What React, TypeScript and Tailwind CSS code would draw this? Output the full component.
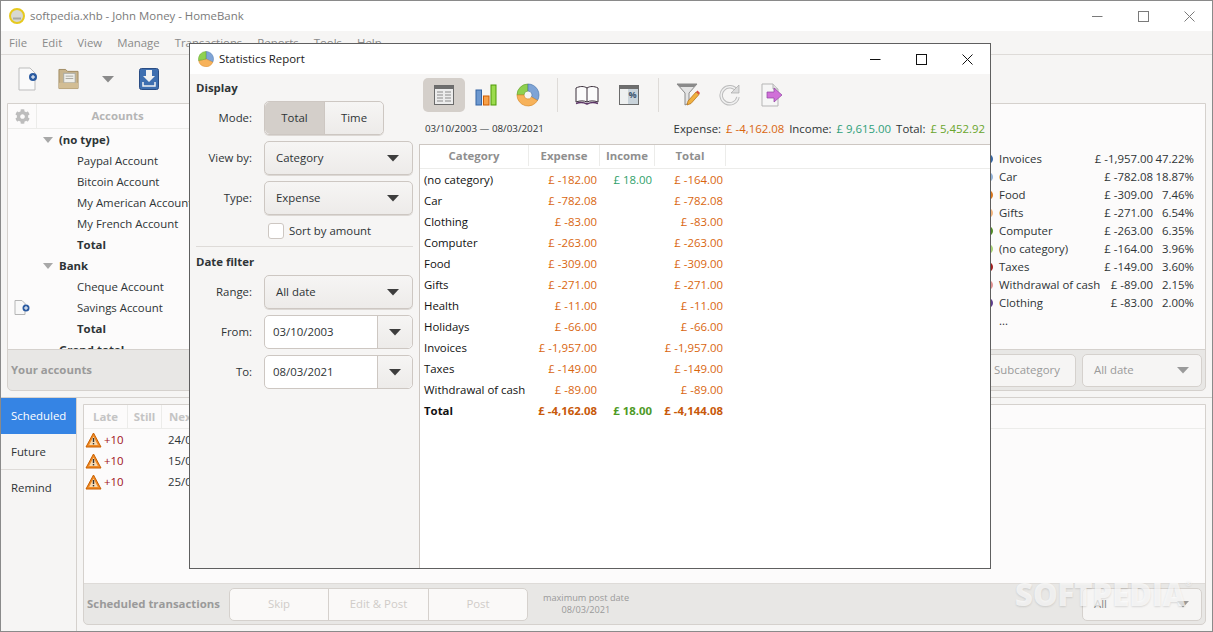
import { FaCog } from "react-icons/fa";

const accounts = [
  { name: "(no type)", kind: "group" },
  { name: "Paypal Account", kind: "item" },
  { name: "Bitcoin Account", kind: "item" },
  { name: "My American Account", kind: "item" },
  { name: "My French Account", kind: "item" },
  { name: "Total", kind: "total" },
  { name: "Bank", kind: "group" },
  { name: "Cheque Account", kind: "item" },
  { name: "Savings Account", kind: "item", icon: true },
  { name: "Total", kind: "total" },
  { name: "Grand total", kind: "grand" },
];

const legend = [
  ["Invoices", "£ -1,957.00", "47.22%", "#3465a4"],
  ["Car", "£ -782.08", "18.87%", "#8fb0d8"],
  ["Food", "£ -309.00", "7.46%", "#d9761e"],
  ["Gifts", "£ -271.00", "6.54%", "#f2b37a"],
  ["Computer", "£ -263.00", "6.35%", "#4e8a24"],
  ["(no category)", "£ -164.00", "3.96%", "#a4d070"],
  ["Taxes", "£ -149.00", "3.60%", "#a01c1c"],
  ["Withdrawal of cash", "£ -89.00", "2.15%", "#e09090"],
  ["Clothing", "£ -83.00", "2.00%", "#5c3c8c"],
];

const rows = [
  ["(no category)", "£ -182.00", "£ 18.00", "£ -164.00"],
  ["Car", "£ -782.08", "", "£ -782.08"],
  ["Clothing", "£ -83.00", "", "£ -83.00"],
  ["Computer", "£ -263.00", "", "£ -263.00"],
  ["Food", "£ -309.00", "", "£ -309.00"],
  ["Gifts", "£ -271.00", "", "£ -271.00"],
  ["Health", "£ -11.00", "", "£ -11.00"],
  ["Holidays", "£ -66.00", "", "£ -66.00"],
  ["Invoices", "£ -1,957.00", "", "£ -1,957.00"],
  ["Taxes", "£ -149.00", "", "£ -149.00"],
  ["Withdrawal of cash", "£ -89.00", "", "£ -89.00"],
];

const Caret = ({ color = "#3d3d3d" }: { color?: string }) => (
  <svg width="12" height="7" viewBox="0 0 12 7">
    <path d="M0 0h12L6 6.5z" fill={color} />
  </svg>
);

const WinButtons = ({ color }: { color: string }) => (
  <div className="flex h-full">
    <div className="flex w-[46px] items-center justify-center">
      <svg width="11" height="11" viewBox="0 0 11 11"><path d="M0 5.5h10.5" stroke={color} /></svg>
    </div>
    <div className="flex w-[46px] items-center justify-center">
      <svg width="11" height="11" viewBox="0 0 11 11"><rect x="0.5" y="0.5" width="10" height="10" fill="none" stroke={color} /></svg>
    </div>
    <div className="flex w-[46px] items-center justify-center">
      <svg width="11" height="11" viewBox="0 0 11 11"><path d="M.5.5l10 10M10.5.5l-10 10" stroke={color} /></svg>
    </div>
  </div>
);

const PieIcon = ({ size = 16 }: { size?: number }) => (
  <svg width={size} height={size} viewBox="0 0 16 16">
    <path d="M8 8V.5a7.5 7.5 0 0 1 6.8 10.7z" fill="#7fa4d6" stroke="#4f78ad" strokeWidth="0.5" />
    <path d="M8 8l6.8 3.2A7.5 7.5 0 0 1 .6 9.5z" fill="#f7b25a" stroke="#d98b2b" strokeWidth="0.5" />
    <path d="M8 8L.6 9.5A7.5 7.5 0 0 1 8 .5z" fill="#8fd14f" stroke="#67a32e" strokeWidth="0.5" />
  </svg>
);

const DonutIcon = () => (
  <svg width="24" height="24" viewBox="0 0 24 24">
    <path d="M1 12A11 11 0 0 1 12 1V8A4 4 0 0 0 8 12z" fill="#8fd14f" stroke="#67a32e" strokeWidth="0.7" />
    <path d="M12 1A11 11 0 0 1 21.5 17.5L15.500 14A4 4 0 0 0 12 8z" fill="#7fa4d6" stroke="#4f78ad" strokeWidth="0.7" />
    <path d="M21.500 17.500A11 11 0 0 1 1 12L8 12A4 4 0 0 0 15.500 14z" fill="#f7b25a" stroke="#d98b2b" strokeWidth="0.7" />
  </svg>
);

const TableIcon = () => (
  <svg width="20" height="20" viewBox="0 0 20 20">
    <rect x="0.5" y="0.5" width="19" height="19" fill="#ececec" stroke="#6b6b6b" />
    <rect x="1" y="1" width="18" height="3" fill="#6e6e6e" />
    <path d="M3 7h6M11 7h6M3 10h6M11 10h6M3 13h6M11 13h6M3 16h6M11 16h6" stroke="#8a8a8a" />
  </svg>
);

const BarsIcon = () => (
  <svg width="22" height="22" viewBox="0 0 22 22">
    <rect x="1" y="6" width="5.5" height="15" fill="#6d98cf" stroke="#3465a4" />
    <rect x="8.5" y="12" width="5.5" height="9" fill="#f7a14a" stroke="#ce5c00" />
    <rect x="16" y="1" width="5" height="20" fill="#9bdb4d" stroke="#4e9a06" />
  </svg>
);

const BookIcon = () => (
  <svg width="24" height="20" viewBox="0 0 24 20">
    <path d="M1 17V3c4-2 8-2 11 0 3-2 7-2 11 0v14c-4-1.500-8-1.500-11 0-3-1.500-7-1.500-11 0z" fill="#fbfbfb" stroke="#3b2f3b" />
    <path d="M12 3v14" stroke="#3b2f3b" />
    <path d="M1 18.500c4-1.500 8-1 11 .5 3-1.500 7-2 11-.5" fill="none" stroke="#5c3566" strokeWidth="1.500" />
  </svg>
);

const PercentIcon = () => (
  <svg width="20" height="20" viewBox="0 0 20 20">
    <rect x="0.5" y="0.5" width="19" height="19" fill="#eef0f0" stroke="#6b6b6b" />
    <rect x="1" y="1" width="18" height="3" fill="#6e6e6e" />
    <rect x="9" y="4" width="10" height="15" fill="#c9d3da" />
    <text x="13.500" y="12.500" fontSize="9" fontWeight="700" textAnchor="middle" fill="#3d5670">%</text>
  </svg>
);

const FilterIcon = () => (
  <svg width="24" height="24" viewBox="0 0 24 24">
    <path d="M1 1h20l-8 9v10l-4 2V10z" fill="#e4e4e4" stroke="#8a8a8a" />
    <path d="M1 1h20l-3 3H4z" fill="#8a8a8a" />
    <path d="M11 22l1-4 8-9 3 2.500-8 9z" fill="#f0b040" stroke="#b06a10" strokeWidth="0.7" />
    <path d="M20 9l1.500-1.500 2.500 2.500-1 1.500z" fill="#d9503f" />
  </svg>
);

const RefreshIcon = () => (
  <svg width="22" height="22" viewBox="0 0 22 22">
    <path d="M18 7a8.500 8.500 0 1 0 1 6" fill="none" stroke="#bdbdbd" strokeWidth="3.500" />
    <path d="M18 7a8.500 8.500 0 1 0 1 6" fill="none" stroke="#f0f0f0" strokeWidth="1.500" />
    <path d="M20 1v8h-8z" fill="#dcdcdc" stroke="#a0a0a0" strokeWidth="0.6" />
  </svg>
);

const ExportIcon = () => (
  <svg width="22" height="24" viewBox="0 0 22 24">
    <path d="M1 1h11l5 5v17H1z" fill="#f6f6f6" stroke="#b5b5b5" />
    <path d="M12 1v5h5" fill="#e0e0e0" stroke="#b5b5b5" />
    <path d="M6 9h7V5l8 7-8 7v-4H6z" fill="#d070d8" stroke="#8e44a0" strokeWidth="0.7" />
  </svg>
);

const Warning = () => (
  <svg width="17" height="16" viewBox="0 0 17 16">
    <path d="M8.500 1L16 15H1z" fill="#f08a24" stroke="#c75f00" strokeLinejoin="round" />
    <path d="M8.500 4.500L12.800 13H4.200z" fill="#f6d9b0" />
    <rect x="7.800" y="6" width="1.400" height="4" fill="#333" />
    <rect x="7.800" y="11" width="1.400" height="1.400" fill="#333" />
  </svg>
);

const Select = ({ label }: { label: string }) => (
  <div className="flex h-[34px] w-[149px] items-center justify-between rounded-[5px] border border-[#cdc7c2] bg-linear-to-b from-[#f6f5f4] to-[#edebe9] pl-[11px] pr-[13px] shadow-[0_1px_0_#dcd8d4]">
    <span>{label}</span>
    <Caret />
  </div>
);

const DateField = ({ value }: { value: string }) => (
  <div className="flex h-[34px] w-[149px] rounded-[5px] border border-[#cdc7c2] bg-white">
    <span className="flex flex-1 items-center pl-[8px]">{value}</span>
    <span className="flex w-[35px] items-center justify-center rounded-r-[5px] border-l border-[#cdc7c2] bg-linear-to-b from-[#f6f5f4] to-[#edebe9]">
      <Caret />
    </span>
  </div>
);

const Field = ({ label, children }: { label: string; children: React.ReactNode }) => (
  <div className="flex items-center">
    <span className="w-[56px] shrink-0 text-right">{label}</span>
    <div className="ml-[12px]">{children}</div>
  </div>
);

const StatsDialog = () => (
  <div className="absolute left-[188px] top-[42px] z-10 flex h-[526px] w-[802px] flex-col border border-[#5f5f5f] bg-[#f6f5f4] text-[#2e3436]">
    <div className="flex h-[30px] shrink-0 items-center justify-between bg-white pl-[8px] text-[#1a1a1a]">
      <div className="flex items-center gap-[5px]">
        <PieIcon />
        <span>Statistics Report</span>
      </div>
      <WinButtons color="#111111" />
    </div>
    <div className="flex min-h-0 flex-1">
      <div className="w-[229px] shrink-0 pl-[6px] pr-[6px] pt-[5px]">
        <div className="mb-[5px] h-[17px] font-bold leading-[17px]">Display</div>
        <div className="flex flex-col gap-[6px]">
          <Field label="Mode:">
            <div className="flex h-[34px] w-[120px] rounded-[5px] border border-[#cdc7c2] shadow-[0_1px_0_#dcd8d4]">
              <span className="flex w-[60px] items-center justify-center rounded-l-[5px] border-r border-[#cdc7c2] bg-[#d4cfca]">Total</span>
              <span className="flex flex-1 items-center justify-center rounded-r-[5px] bg-linear-to-b from-[#f6f5f4] to-[#edebe9]">Time</span>
            </div>
          </Field>
          <Field label="View by:"><Select label="Category" /></Field>
          <Field label="Type:"><Select label="Expense" /></Field>
        </div>
        <div className="ml-[72px] mt-[7px] flex h-[18px] items-center gap-[5px]">
          <span className="h-[16px] w-[16px] rounded-[3px] border border-[#cdc7c2] bg-white" />
          <span>Sort by amount</span>
        </div>
        <div className="mt-[6px] border-t border-[#dedbd8]" />
        <div className="mb-[5px] mt-[6px] h-[17px] font-bold leading-[17px]">Date filter</div>
        <div className="flex flex-col gap-[6px]">
          <Field label="Range:"><Select label="All date" /></Field>
          <Field label="From:"><DateField value="03/10/2003" /></Field>
          <Field label="To:"><DateField value="08/03/2021" /></Field>
        </div>
      </div>
      <div className="flex min-w-0 flex-1 flex-col">
        <div className="mt-[4px] flex h-[34px] items-center pl-[4px]">
          <span className="flex h-[34px] w-[42px] items-center justify-center rounded-[5px] bg-[#d4cfca]"><TableIcon /></span>
          <span className="flex w-[42px] justify-center"><BarsIcon /></span>
          <span className="flex w-[42px] justify-center"><DonutIcon /></span>
          <span className="mx-[8px] h-[34px] border-l border-[#dedbd8]" />
          <span className="flex w-[42px] justify-center"><BookIcon /></span>
          <span className="flex w-[42px] justify-center"><PercentIcon /></span>
          <span className="mx-[8px] h-[34px] border-l border-[#dedbd8]" />
          <span className="flex w-[42px] justify-center"><FilterIcon /></span>
          <span className="flex w-[42px] justify-center"><RefreshIcon /></span>
          <span className="flex w-[42px] justify-center"><ExportIcon /></span>
        </div>
        <div className="flex h-[32px] items-center justify-between pl-[6px] pr-[5px] pt-[2px]">
          <span className="text-[9.8px]">03/10/2003 — 08/03/2021</span>
          <span className="flex gap-[5px]">
            <span>Expense:</span>
            <span className="text-[#d9660f]">£ -4,162.08</span>
            <span>Income:</span>
            <span className="text-[#2f9f7a]">£ 9,615.00</span>
            <span>Total:</span>
            <span className="text-[#6aa52c]">£ 5,452.92</span>
          </span>
        </div>
        <div className="min-h-0 flex-1 border-l border-t border-[#cdc7c2] bg-white">
          <div className="flex h-[24px] border-b border-[#ececea] pb-[2px] font-bold text-[#8f8f8f]">
            <span className="flex w-[109px] items-center justify-center border-r border-[#ececea]">Category</span>
            <span className="flex w-[71px] items-center justify-center border-r border-[#ececea]">Expense</span>
            <span className="flex w-[55px] items-center justify-center border-r border-[#ececea]">Income</span>
            <span className="flex w-[71px] items-center justify-center border-r border-[#ececea]">Total</span>
          </div>
          {rows.map((r) => (
            <div key={r[0]} className="flex h-[21px] items-center text-[#111111]">
              <span className="w-[109px] whitespace-nowrap pl-[4px]">{r[0]}</span>
              <span className="w-[71px] pr-[3px] text-right text-[#d9660f]">{r[1]}</span>
              <span className="w-[55px] pr-[3px] text-right text-[#2f9f6a]">{r[2]}</span>
              <span className="w-[71px] pr-[3px] text-right text-[#d9660f]">{r[3]}</span>
            </div>
          ))}
          <div className="flex h-[21px] items-center font-bold text-[#111111]">
            <span className="w-[109px] pl-[4px]">Total</span>
            <span className="w-[71px] whitespace-nowrap pr-[3px] text-right text-[#c8590a]">£ -4,162.08</span>
            <span className="w-[55px] whitespace-nowrap pr-[3px] text-right text-[#4e9a26]">£ 18.00</span>
            <span className="w-[71px] whitespace-nowrap pr-[3px] text-right text-[#c8590a]">£ -4,144.08</span>
          </div>
        </div>
      </div>
    </div>
  </div>
);

export default function App() {
  return (
    <div className="relative flex h-[632px] w-[1213px] flex-col overflow-hidden border border-[#8a8a8a] bg-[#f6f5f4] font-['Open_Sans','Noto_Sans',sans-serif] text-[11.4px] text-[#2e3436]">
      <div className="flex h-[30px] shrink-0 items-center justify-between bg-white pl-[8px] text-[#7a7a7a]">
        <div className="flex items-center gap-[5px]">
          <svg width="16" height="16" viewBox="0 0 16 16">
            <circle cx="8" cy="8" r="7" fill="#d8d8d0" stroke="#e6c91e" strokeWidth="2" />
            <path d="M4 9.500h8v2H4z" fill="#a8a8a0" />
          </svg>
          <span>softpedia.xhb - John Money - HomeBank</span>
        </div>
        <WinButtons color="#7a7a7a" />
      </div>
      <div className="flex h-[24px] shrink-0 items-center gap-[15px] border-b border-[#dedbd8] pl-[8px] text-[#8a8a8a]">
        <span>File</span><span>Edit</span><span>View</span><span>Manage</span><span>Transactions</span><span>Reports</span><span>Tools</span><span>Help</span>
      </div>
      <div className="flex h-[48px] shrink-0 items-center pl-[17px]">
        <svg width="20" height="24" viewBox="0 0 20 24">
          <path d="M1 1h11l5 5v17H1z" fill="#fafafa" stroke="#bdbdbd" />
          <circle cx="15" cy="10" r="4" fill="#2a5aa0" />
          <path d="M13 10h4M15 8v4" stroke="#fff" />
        </svg>
        <svg className="ml-[20px]" width="21" height="22" viewBox="0 0 22 22">
          <path d="M1 1h7l2 2h11v18H1z" fill="#c8b48c" stroke="#a08a62" />
          <rect x="6" y="5" width="12" height="10" fill="#eeeeea" stroke="#a8a8a0" />
          <path d="M8 8h8M8 10.500h8" stroke="#a8a8a0" />
          <path d="M1 15h20v6H1z" fill="#d2bd94" />
        </svg>
        <span className="ml-[23px]"><Caret color="#8a8a8a" /></span>
        <svg className="ml-[25px]" width="20" height="22" viewBox="0 0 20 22">
          <rect x="0.500" y="0.500" width="19" height="21" rx="2" fill="#3f6fb0" stroke="#2a4d84" />
          <path d="M7 2h6v6h3l-6 6-6-6h3z" fill="#f2f2f2" />
          <path d="M4 14v4h12v-4" fill="none" stroke="#f2f2f2" strokeWidth="1.500" />
        </svg>
      </div>

      <div className="mx-[6px] flex h-[288px] shrink-0 flex-col rounded-b-[5px] border border-[#d5d1cd] bg-[#e8e7e5]">
        <div className="flex h-[245px] bg-[#fcfbfb]">
          <div className="w-[240px] shrink-0 overflow-hidden">
            <div className="flex h-[25px] border-b border-[#ececea] font-bold text-[#b5b5b5]">
              <span className="flex w-[29px] items-center justify-center border-r border-[#ececea]">
                <FaCog className="text-[#bdbdbd]" size={15} />
              </span>
              <span className="flex w-[161px] items-center justify-center">Accounts</span>
            </div>
            {accounts.map((a, i) => (
              <div key={i} className="relative flex h-[21px] items-center whitespace-nowrap">
                {a.icon && (
                  <svg className="absolute left-[6px] top-[3px]" width="16" height="15" viewBox="0 0 16 15">
                    <path d="M1 .5h7l3 3v11H1z" fill="#f8f8f8" stroke="#b5b5b5" />
                    <circle cx="12" cy="8" r="3.500" fill="#2a5aa0" />
                    <path d="M10 8h4M12 6v4" stroke="#fff" />
                  </svg>
                )}
                {a.kind === "group" && (
                  <span className="ml-[35px] flex w-[16px]"><svg width="10" height="6" viewBox="0 0 10 6"><path d="M0 0h10L5 6z" fill="#a8a8a8" /></svg></span>
                )}
                {a.kind === "group" && <span className="font-bold">{a.name}</span>}
                {a.kind === "item" && <span className="ml-[69px]">{a.name}</span>}
                {a.kind === "total" && <span className="ml-[69px] font-bold">{a.name}</span>}
                {a.kind === "grand" && <span className="ml-[51px] font-bold">{a.name}</span>}
              </div>
            ))}
          </div>
          <div className="flex flex-1 justify-end pr-[11px] pt-[46px]">
            <div className="w-[211px]">
              {legend.map((l) => (
                <div key={l[0]} className="flex h-[18px] items-center whitespace-nowrap">
                  <span className="h-[10px] w-[10px] shrink-0 rounded-full" style={{ backgroundColor: l[3] }} />
                  <span className="ml-[6px] w-[84px]">{l[0]}</span>
                  <span className="w-[70px] text-right">{l[1]}</span>
                  <span className="ml-auto text-right">{l[2]}</span>
                </div>
              ))}
              <div className="ml-[16px] h-[18px] leading-[18px]">...</div>
            </div>
          </div>
        </div>
        <div className="flex flex-1 items-center justify-between border-t border-[#d5d1cd] pl-[3px] pr-[3px]">
          <span className="font-bold text-[#9a9a9a]">Your accounts</span>
          <div className="flex items-center gap-[6px] text-[#9a9a9a]">
            <span className="flex h-[33px] w-[98px] items-center justify-center rounded-r-[5px] border border-[#d5d1cd] bg-[#f6f5f4]">Subcategory</span>
            <span className="flex h-[33px] w-[120px] items-center justify-between rounded-[5px] border border-[#d5d1cd] bg-[#f6f5f4] pl-[11px] pr-[12px]">
              All date
              <Caret color="#9a9a9a" />
            </span>
          </div>
        </div>
      </div>

      <div className="mt-[6px] flex min-h-0 flex-1 border-t border-[#d5d1cd]">
        <div className="w-[76px] shrink-0 border-r border-[#d5d1cd] text-[#2e3436]">
          <div className="flex h-[36px] items-center bg-[#3584e4] pl-[10px] text-white">Scheduled</div>
          <div className="flex h-[36px] items-center border-b border-[#dedbd8] pl-[10px]">Future</div>
          <div className="flex h-[36px] items-center pl-[10px]">Remind</div>
        </div>
        <div className="mx-[6px] mb-[6px] mt-[6px] flex min-w-0 flex-1 flex-col rounded-b-[5px] border border-[#d5d1cd] bg-[#e8e7e5]">
          <div className="min-h-0 flex-1 bg-[#fcfbfb]">
            <div className="flex h-[24px] border-b border-[#ececea] font-bold text-[#c4c4c4]">
              <span className="flex w-[44px] items-center justify-center border-r border-[#ececea]">Late</span>
              <span className="flex w-[34px] items-center justify-center border-r border-[#ececea]">Still</span>
              <span className="flex items-center pl-[7px]">Next date</span>
            </div>
            {["24/03/2021", "15/03/2021", "25/03/2021"].map((d) => (
              <div key={d} className="flex h-[21px] items-center">
                <span className="ml-[1px]"><Warning /></span>
                <span className="ml-[2px] w-[64px] text-[#a01020]">+10</span>
                <span>{d}</span>
              </div>
            ))}
          </div>
          <div className="flex h-[41px] shrink-0 items-center border-t border-[#dedbd8] pl-[3px] pr-[3px]">
            <span className="w-[142px] whitespace-nowrap font-bold text-[#9a9a9a]">Scheduled transactions</span>
            <div className="flex h-[33px] w-[299px] rounded-[5px] border border-[#d5d1cd] bg-[#faf9f8] text-[#d0ccc8]">
              <span className="flex w-[99px] items-center justify-center border-r border-[#d5d1cd]">Skip</span>
              <span className="flex w-[100px] items-center justify-center border-r border-[#d5d1cd]">Edit & Post</span>
              <span className="flex flex-1 items-center justify-center">Post</span>
            </div>
            <div className="ml-[13px] flex w-[90px] flex-col items-center text-[9.2px] leading-[12px] text-[#9a9a9a]">
              <span>maximum post date</span>
              <span>08/03/2021</span>
            </div>
            <span className="ml-auto flex h-[33px] w-[120px] items-center justify-between rounded-[5px] border border-[#d5d1cd] bg-[#f6f5f4] pl-[11px] pr-[12px] text-[#8a8a8a]">
              All
              <Caret color="#9a9a9a" />
            </span>
          </div>
        </div>
      </div>

      <StatsDialog />
      <span className="pointer-events-none absolute left-[1014px] top-[573px] z-20 flex items-start text-[31px] font-extrabold leading-[40px] text-white/70 [text-shadow:0_1px_2px_rgba(0,0,0,0.12)]">
        SOFTPEDIA
        <span className="mt-[4px] text-[8px] font-normal leading-[10px]">®</span>
      </span>
    </div>
  );
}
